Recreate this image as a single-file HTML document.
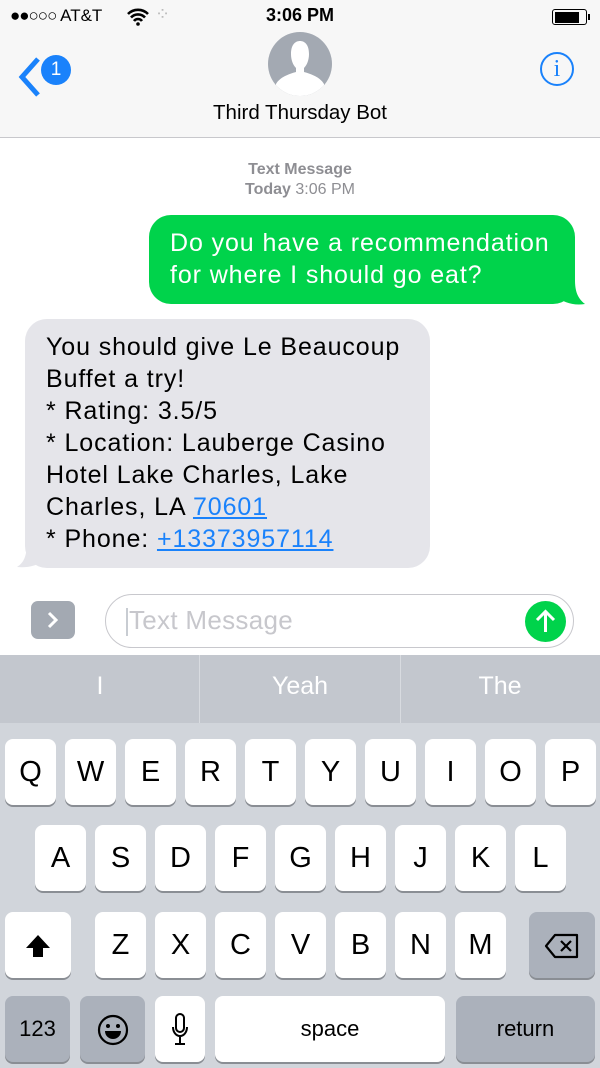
<!DOCTYPE html>
<html><head><meta charset="utf-8"><style>
*{margin:0;padding:0;box-sizing:border-box}
body{width:600px;height:1068px;overflow:hidden;background:#fff;font-family:"Liberation Sans",sans-serif;position:relative}
.a{position:absolute}
.k{position:absolute;background:#fff;border-radius:8px;box-shadow:0 2px 0 #8a8e94;text-align:center;font-size:29px;color:#000;line-height:66px;height:66px;width:51px}
.d{background:#abb1bb}
.msg{font-size:25px;letter-spacing:0.9px;line-height:32px;position:absolute;white-space:nowrap}
</style></head><body>
<div class="a" style="left:0;top:0;width:600px;height:138px;background:#f7f7f7;border-bottom:1px solid #c8c8cc"></div>
<div class="a" style="left:10px;top:6px;font-size:17px;color:#000">
<span style="letter-spacing:-1px">●●○○○</span> AT&amp;T</div>
<svg class="a" style="left:126px;top:8px" width="24" height="18" viewBox="0 0 24 18"><path d="M2 6a14 14 0 0 1 20 0M5 9.5a9.5 9.5 0 0 1 14 0M8 13a5 5 0 0 1 8 0" stroke="#000" stroke-width="2.6" fill="none"/><circle cx="12" cy="16" r="1.8"/></svg>
<div class="a" style="left:155px;top:4px;font-size:18px;color:#bbb">⁘</div>
<div class="a" style="left:0;width:600px;top:5px;text-align:center;font-size:18px;font-weight:bold">3:06 PM</div>
<div class="a" style="left:552px;top:9px;width:35px;height:16px;border:1.5px solid #000;border-radius:3px;padding:1.5px"><div style="background:#000;width:24px;height:100%"></div></div>
<div class="a" style="left:588px;top:14px;width:2px;height:6px;background:#000"></div>
<svg class="a" style="left:18px;top:56px" width="24" height="42" viewBox="0 0 24 42"><path d="M20 3L4 21l16 18" stroke="#1a82fb" stroke-width="5" fill="none"/></svg>
<div class="a" style="left:41px;top:55px;width:30px;height:30px;border-radius:15px;background:#1a82fb;color:#fff;font-size:19px;text-align:center;line-height:30px">1</div>
<div class="a" style="left:268px;top:32px;width:64px;height:64px;border-radius:32px;background:#a3a9b2;overflow:hidden">
<svg width="64" height="64" viewBox="0 0 64 64"><path d="M23 22c0-9 4-13 9-13s9 4 9 13c0 6-2 11-5 14v4c7 2 16 5 20 12v12H8V52c4-7 13-10 20-12v-4c-3-3-5-8-5-14z" fill="#fff"/></svg></div>
<div class="a" style="left:0;width:600px;top:101px;text-align:center;font-size:20.5px;color:#000">Third Thursday Bot</div>
<div class="a" style="left:540px;top:52px;width:34px;height:34px;border:2px solid #1a82fb;border-radius:17px;color:#1a82fb;text-align:center;font-size:24px;line-height:30px;font-family:'Liberation Serif',serif">i</div>

<div class="a" style="left:0;width:600px;top:160px;text-align:center;font-size:16px;color:#8e8e93;line-height:20px"><b>Text Message</b><br><b>Today</b> 3:06 PM</div>

<div class="a" style="left:149px;top:215px;width:426px;height:89px;background:#00d34b;border-radius:22px"></div>
<svg class="a" style="left:555px;top:280px" width="30" height="26"><path d="M0 0h20c0 10 2 18 10 24C18 26 8 22 0 16z" fill="#00d34b"/></svg>
<div class="msg" style="left:170px;top:227px;color:#fff">Do you have a recommendation<br>for where I should go eat?</div>

<div class="a" style="left:25px;top:319px;width:405px;height:249px;background:#e5e5ea;border-radius:22px"></div>
<svg class="a" style="left:15px;top:540px" width="30" height="28"><path d="M30 0v20c-8 6-18 8-28 7 8-5 10-13 10-27z" fill="#e5e5ea"/></svg>
<div class="msg" style="left:46px;top:331px;color:#000">You should give Le Beaucoup<br>Buffet a try!<br>* Rating: 3.5/5<br>* Location: Lauberge Casino<br>Hotel Lake Charles, Lake<br>Charles, LA <u style="color:#1a82fb">70601</u><br>* Phone: <u style="color:#1a82fb">+13373957114</u></div>

<div class="a" style="left:31px;top:601px;width:44px;height:38px;border-radius:7px;background:#a3a9b2"></div>
<svg class="a" style="left:44px;top:610px" width="18" height="20"><path d="M5 3l7 7-7 7" stroke="#fff" stroke-width="3" fill="none"/></svg>
<div class="a" style="left:105px;top:594px;width:469px;height:54px;border:1.5px solid #c8c8cd;border-radius:27px"></div>
<div class="a" style="left:126px;top:608px;width:2px;height:28px;background:#c8ccd2"></div>
<div class="a" style="left:129px;top:605px;font-size:26px;color:#c7c7cc;letter-spacing:0.3px">Text Message</div>
<div class="a" style="left:525px;top:601px;width:41px;height:41px;border-radius:21px;background:#00d34b"></div>
<svg class="a" style="left:525px;top:601px" width="41" height="41"><path d="M20.5 31V11M12 19l8.5-8.5L29 19" stroke="#fff" stroke-width="3" fill="none"/></svg>

<div class="a" style="left:0;top:655px;width:600px;height:413px;background:#d1d5db"></div>
<div class="a" style="left:0;top:655px;width:600px;height:68px;background:#c3c7ce"></div>
<div class="a" style="left:199px;top:655px;width:1px;height:68px;background:#d8dbe0"></div>
<div class="a" style="left:400px;top:655px;width:1px;height:68px;background:#d8dbe0"></div>
<div class="a" style="left:0;width:200px;top:672px;text-align:center;font-size:25px;color:#fff">I</div>
<div class="a" style="left:200px;width:200px;top:672px;text-align:center;font-size:25px;color:#fff">Yeah</div>
<div class="a" style="left:400px;width:200px;top:672px;text-align:center;font-size:25px;color:#fff">The</div>

<div class="k" style="left:5px;top:739px">Q</div><div class="k" style="left:65px;top:739px">W</div><div class="k" style="left:125px;top:739px">E</div><div class="k" style="left:185px;top:739px">R</div><div class="k" style="left:245px;top:739px">T</div><div class="k" style="left:305px;top:739px">Y</div><div class="k" style="left:365px;top:739px">U</div><div class="k" style="left:425px;top:739px">I</div><div class="k" style="left:485px;top:739px">O</div><div class="k" style="left:545px;top:739px">P</div>
<div class="k" style="left:35px;top:825px">A</div><div class="k" style="left:95px;top:825px">S</div><div class="k" style="left:155px;top:825px">D</div><div class="k" style="left:215px;top:825px">F</div><div class="k" style="left:275px;top:825px">G</div><div class="k" style="left:335px;top:825px">H</div><div class="k" style="left:395px;top:825px">J</div><div class="k" style="left:455px;top:825px">K</div><div class="k" style="left:515px;top:825px">L</div>
<div class="k" style="left:5px;top:912px;width:66px"><svg width="30" height="30" style="vertical-align:middle" viewBox="0 0 30 30"><path d="M15 4L3 17h7v9h10v-9h7z"/></svg></div>
<div class="k" style="left:95px;top:912px">Z</div><div class="k" style="left:155px;top:912px">X</div><div class="k" style="left:215px;top:912px">C</div><div class="k" style="left:275px;top:912px">V</div><div class="k" style="left:335px;top:912px">B</div><div class="k" style="left:395px;top:912px">N</div><div class="k" style="left:455px;top:912px">M</div>
<div class="k d" style="left:529px;top:912px;width:66px"><svg width="36" height="26" style="vertical-align:middle" viewBox="0 0 36 26"><path d="M11 2h22v22H11L2 13z" stroke="#000" stroke-width="2.2" fill="none" stroke-linejoin="round"/><path d="M17 8l10 10M27 8L17 18" stroke="#000" stroke-width="2.2"/></svg></div>
<div class="k d" style="left:5px;top:996px;width:65px;font-size:22px">123</div>
<div class="k d" style="left:80px;top:996px;width:65px"><svg width="32" height="32" style="vertical-align:middle" viewBox="0 0 32 32"><circle cx="16" cy="16" r="14" stroke="#000" stroke-width="2.2" fill="none"/><circle cx="11" cy="12" r="2"/><circle cx="21" cy="12" r="2"/><path d="M8 17h16c0 5-4 8-8 8s-8-3-8-8z"/></svg></div>
<div class="k" style="left:155px;top:996px;width:50px"><svg width="20" height="36" style="vertical-align:middle" viewBox="0 0 20 36"><rect x="6" y="2" width="8" height="18" rx="4" stroke="#000" stroke-width="2" fill="none"/><path d="M3 15c0 5 3 9 7 9s7-4 7-9M10 24v8M5 32h10" stroke="#000" stroke-width="2" fill="none"/></svg></div>
<div class="k" style="left:215px;top:996px;width:230px;font-size:22px">space</div>
<div class="k d" style="left:456px;top:996px;width:139px;font-size:22px">return</div>
</body></html>
